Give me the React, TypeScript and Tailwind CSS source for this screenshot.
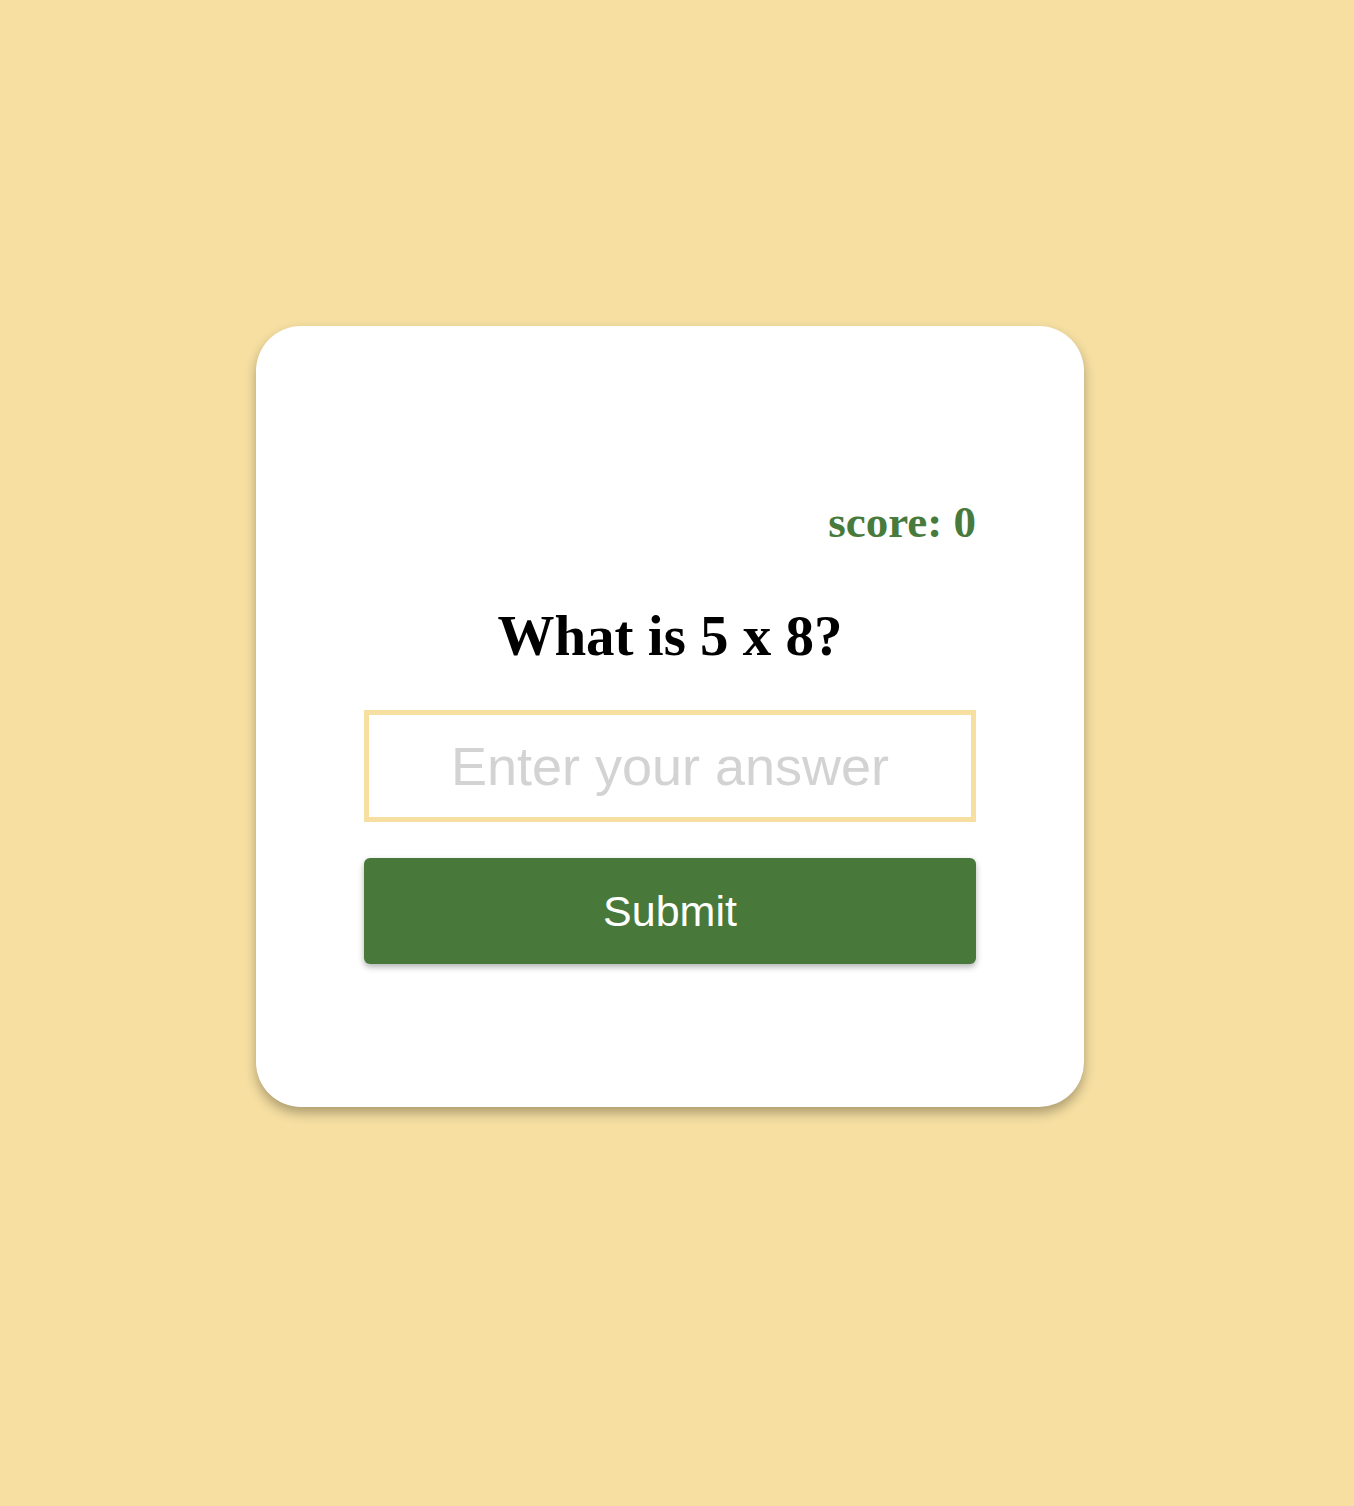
import React from "react";

export default function App() {
  return (
    <div className="min-h-[1506px] w-full bg-[#f6dfa1] pr-[14px] pt-[326px]">
      <div className="mx-auto flex w-[828px] flex-col rounded-[45px] bg-white px-[108px] pb-[143px] pt-[170px] shadow-[0_6px_12px_rgba(0,0,0,0.3)]">
        <div className="text-right text-[45px] font-bold leading-[52px] text-[#487a3b] [font-family:'Liberation_Serif',serif]">
          score: 0
        </div>
        <h1 className="mt-[55px] text-center text-[57px] font-bold leading-[66px] text-black [font-family:'Liberation_Serif',serif]">
          What is 5 x 8?
        </h1>
        <input
          type="text"
          placeholder="Enter your answer"
          className="mt-[41px] box-border h-[112px] w-full border-[5px] border-solid border-[#f6dfa1] bg-white text-center text-[54px] text-black outline-none placeholder:text-[#d3d3d3] [font-family:'Liberation_Sans',Arial,sans-serif]"
        />
        <button className="mt-[36px] h-[106px] w-full rounded-[6px] bg-[#48793b] text-[43px] text-white shadow-[0_3px_6px_rgba(0,0,0,0.3)] [font-family:'Liberation_Sans',Arial,sans-serif]">
          Submit
        </button>
      </div>
    </div>
  );
}
